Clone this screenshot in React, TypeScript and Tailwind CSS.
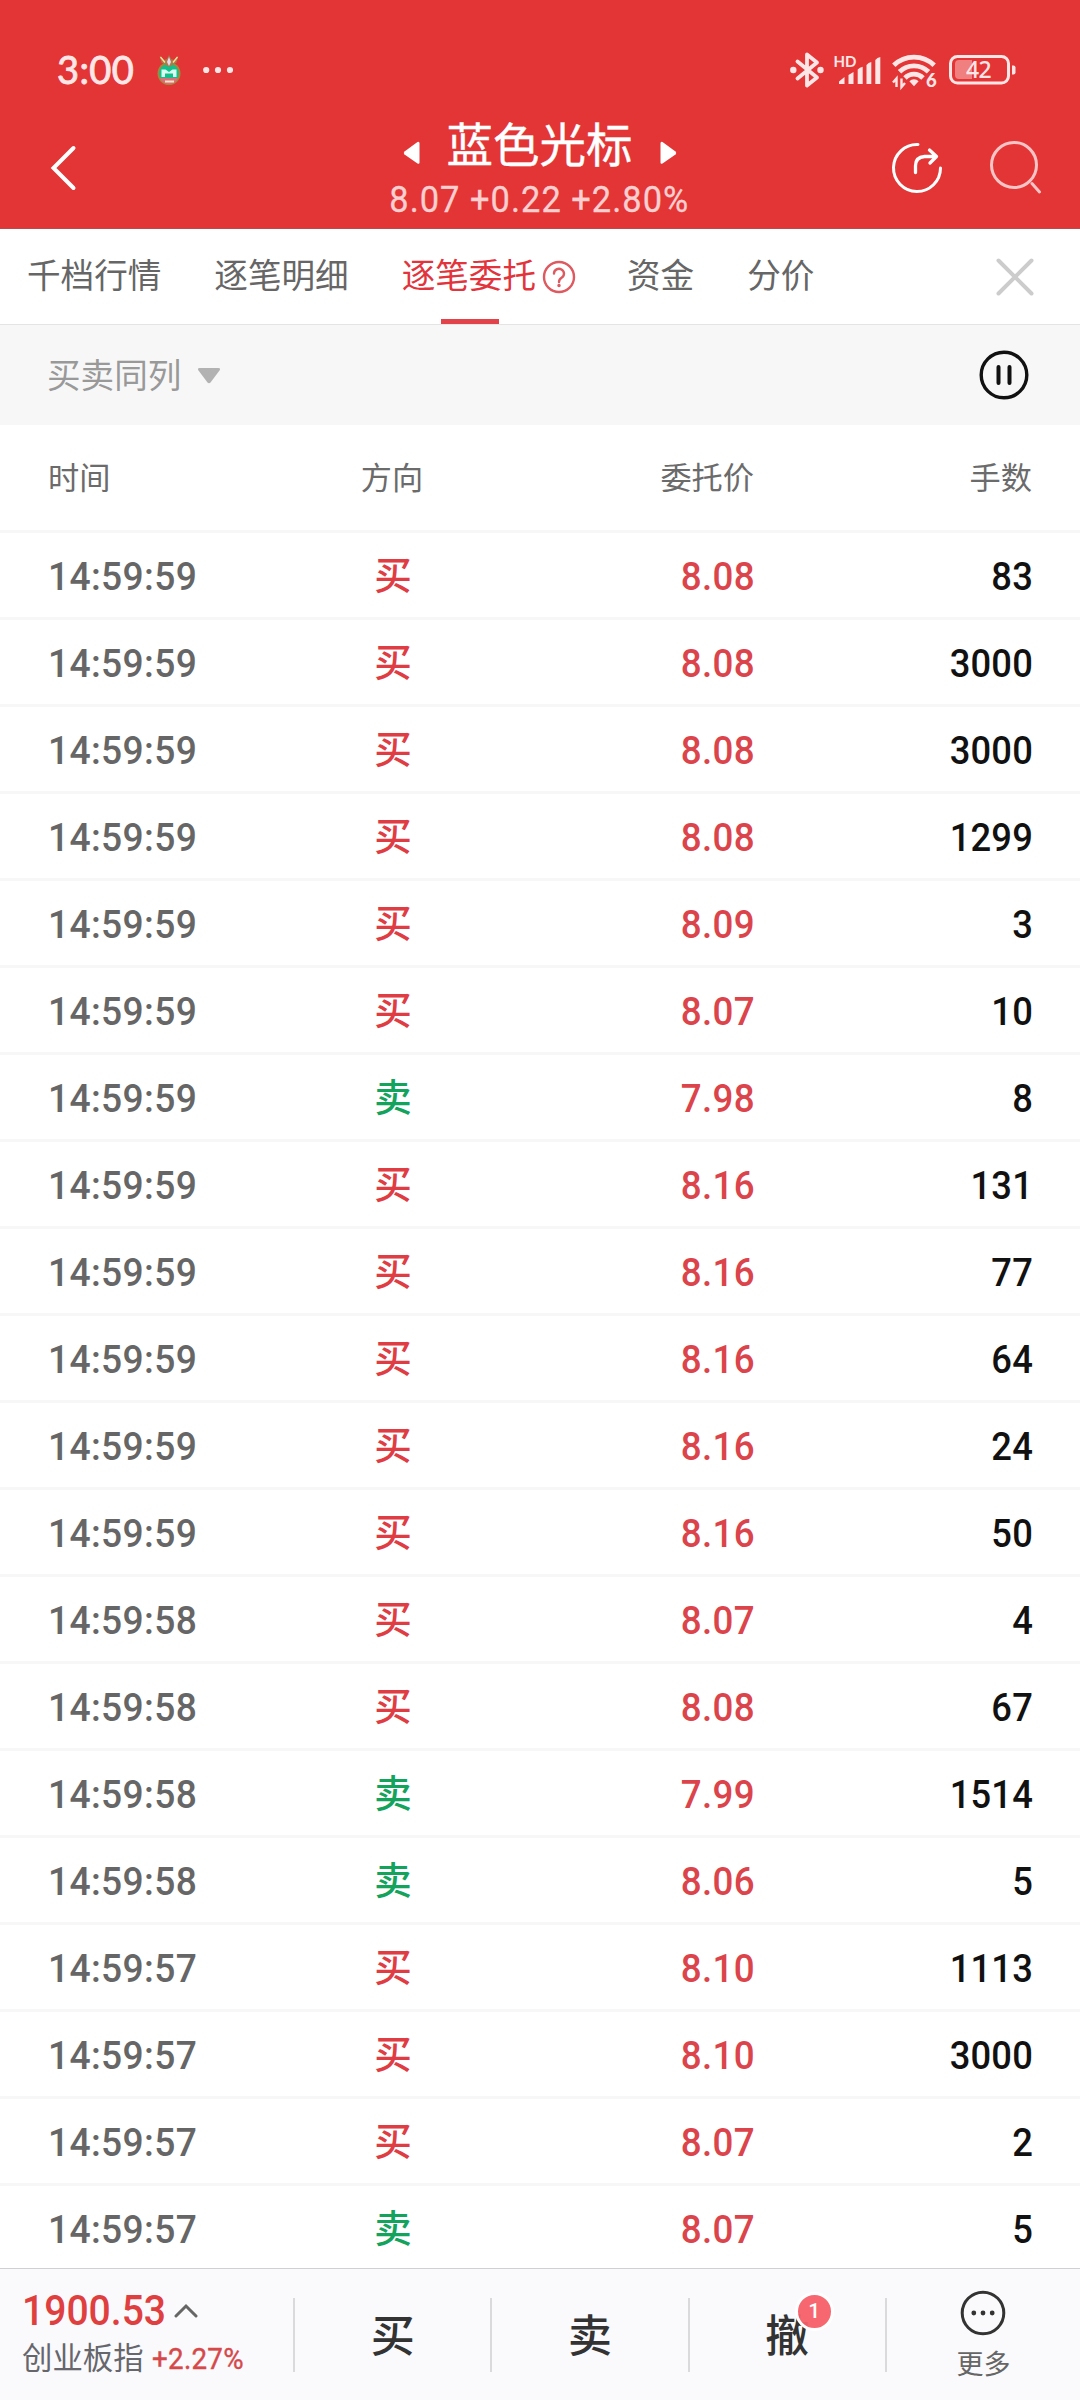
type Side = "买" | "卖"

type Order = {
  time: string
  side: Side
  price: string
  lots: number
}

const orders: Order[] = [
  { time: "14:59:59", side: "买", price: "8.08", lots: 83 },
  { time: "14:59:59", side: "买", price: "8.08", lots: 3000 },
  { time: "14:59:59", side: "买", price: "8.08", lots: 3000 },
  { time: "14:59:59", side: "买", price: "8.08", lots: 1299 },
  { time: "14:59:59", side: "买", price: "8.09", lots: 3 },
  { time: "14:59:59", side: "买", price: "8.07", lots: 10 },
  { time: "14:59:59", side: "卖", price: "7.98", lots: 8 },
  { time: "14:59:59", side: "买", price: "8.16", lots: 131 },
  { time: "14:59:59", side: "买", price: "8.16", lots: 77 },
  { time: "14:59:59", side: "买", price: "8.16", lots: 64 },
  { time: "14:59:59", side: "买", price: "8.16", lots: 24 },
  { time: "14:59:59", side: "买", price: "8.16", lots: 50 },
  { time: "14:59:58", side: "买", price: "8.07", lots: 4 },
  { time: "14:59:58", side: "买", price: "8.08", lots: 67 },
  { time: "14:59:58", side: "卖", price: "7.99", lots: 1514 },
  { time: "14:59:58", side: "卖", price: "8.06", lots: 5 },
  { time: "14:59:57", side: "买", price: "8.10", lots: 1113 },
  { time: "14:59:57", side: "买", price: "8.10", lots: 3000 },
  { time: "14:59:57", side: "买", price: "8.07", lots: 2 },
  { time: "14:59:57", side: "卖", price: "8.07", lots: 5 },
]

function StatusBar() {
  return (
    <div className="flex h-[100px] items-end justify-between pl-[57px] pr-[64px] pb-[8px] text-[#ffe6e6]">
      <div className="flex h-11 items-center">
        <span className="w-[99px] pb-[2px] text-[38px] leading-none tracking-[0.4px] font-['Lato',sans-serif] [-webkit-text-stroke:0.9px_#ffe6e6]">3:00</span>
        {/* Game notification */}
        <svg width="26" height="30" viewBox="0 0 26 30">
          <circle cx="13" cy="18.5" r="11.5" fill="#a8873c" />
          <circle cx="13" cy="18.5" r="9.800" fill="#12c08b" />
          <path d="M4 23h18a9.800 9.800 0 0 1-18 0Z" fill="#d8707c" />
          <path d="M5.500 22v-7.500h4l3.500 2.500 3.500-2.500h4V22h-3.500v-3.500h-8V22Z" fill="#d9fff2" />
          <path d="M10 19h6v4h-6Z" fill="#12c08b" />
          <path d="M3.500.5l4.500 4.500 3-1 2-4 2 4 3 1 4.500-4.500-2 7-3 2-4.500 2.500-4.500-2.500-3-2Z" fill="#a97c48" />
          <path d="M4.500 2l4.500 5.500M21.500 2 17 7.500" stroke="#ffe39a" strokeWidth="1.300" />
          <path d="M13 2l2 5-2 4-2-4Z" fill="#e7d9f2" />
          <path d="M9 25.500h9v2H9Z" fill="#ffe3c8" />
        </svg>
        <svg className="ml-[21px]" width="30" height="8" viewBox="0 0 30 8" fill="currentColor">
          <circle cx="3.200" cy="4" r="3.100" />
          <circle cx="15" cy="4" r="3.100" />
          <circle cx="27" cy="4" r="3.100" />
        </svg>
      </div>

      <div className="flex h-11 items-center">
        <svg width="34" height="38" viewBox="0 0 34 38" fill="none" stroke="currentColor" strokeWidth="3.800" strokeLinejoin="round" strokeLinecap="round">
          <path d="M7.500 10.500 27 26.500 17 34.500V3.500L27 11.500 7.500 27.500" />
          <circle cx="3.300" cy="19" r="3.200" fill="currentColor" stroke="none" />
          <circle cx="30.500" cy="19" r="3.200" fill="currentColor" stroke="none" />
        </svg>
        <svg className="ml-[8px]" width="50" height="38" viewBox="-2 -2 50 38" fill="currentColor">
          <text x="-0.500" y="13.500" fontSize="15" fontWeight="700" fontFamily="Lato, sans-serif">HD</text>
          <path d="M5 31v-2.500l5.500-4.500v7ZM14.500 31v-9l5-3v12Z" />
          <path d="M23.700 31V16.500q2-2 5-2.700V31ZM32.500 31V12q2-2.400 4.800-3V31ZM41.300 31V7q2-2.500 5-3v27Z" />
        </svg>
        <svg className="ml-[10px]" width="47" height="44" viewBox="0 -4 47 44" fill="none" stroke="currentColor" strokeWidth="4.800">
          <path d="M1.800 13.300a29 29 0 0 1 40.400 0" />
          <path d="M7.500 19.800a20.500 20.500 0 0 1 29 0" />
          <path d="M13 26a12.500 12.500 0 0 1 18 0" />
          <path d="M22 34.300l-4.600-5a6.300 6.300 0 0 1 9.200 0Z" fill="currentColor" stroke="none" />
          <path d="M4.500 35v-8.500L1 30.500M9.500 26.500V35l3.500-4" strokeWidth="2.400" />
          <text x="34" y="35" fontSize="18.500" fontWeight="900" fill="currentColor" stroke="none" fontFamily="Lato, sans-serif">6</text>
        </svg>
        <svg className="ml-[10px]" width="67" height="38" viewBox="0 -4 67 38">
          <rect x="1.500" y="1.500" width="58" height="26.500" rx="7" fill="none" stroke="currentColor" strokeWidth="3" />
          <path d="M10 5h13v19H10a4 4 0 0 1-4-4V9a4 4 0 0 1 4-4Z" fill="#f07f7f" />
          <path d="M63 10.500h1.500a2 2 0 0 1 2 2v5a2 2 0 0 1-2 2H63Z" fill="currentColor" />
          <text x="29.500" y="23.300" textAnchor="middle" fontSize="23" letterSpacing="-0.6" fontWeight="500" fill="currentColor" fontFamily="'Noto Sans', sans-serif">42</text>
        </svg>
      </div>
    </div>
  )
}

function Header() {
  return (
    <header className="h-[229px] shrink-0 bg-[#e33536] border-b border-[#b94a4e]">
      <StatusBar />
      <div className="flex h-[128px] justify-between pl-[50px] pr-[38px]">
        <svg className="mt-[45px]" width="138" height="46" viewBox="0 0 138 46" fill="none" stroke="#fff" strokeWidth="4">
          <path d="M23.500 3 3.500 23l20 20" strokeLinecap="round" />
        </svg>

        <div className="flex w-[310px] flex-col items-center">
          <div className="mt-[14px] flex h-[56px] items-center">
            <svg className="mt-[22px]" width="17" height="24" viewBox="0 0 17 24" fill="#fff">
              <path d="M16.500 2.500v19q0 2-2 1L1.500 13.500q-1.500-1.500 0-3L14.500 1q2-1 2 1.500Z" />
            </svg>
            <h1 className="mx-[27px] text-[46.500px] leading-[56px] text-white [-webkit-text-stroke:0.4px_#fff]">蓝色光标</h1>
            <svg className="mt-[22px]" width="17" height="24" viewBox="0 0 17 24" fill="#fff">
              <path d="M.5 2.500v19q0 2 2 1l13-9q1.500-1.500 0-3L2.500 1q-2-1-2 1.500Z" />
            </svg>
          </div>
          <div className="mt-[8px] scale-x-[0.93] text-[37px] leading-[44px] tracking-[1.100px] text-[#ffcfd0] font-['Roboto',sans-serif] [-webkit-text-stroke:0.3px_#ffcfd0] whitespace-pre">8.07 +0.22 +2.80%</div>
        </div>

        <div className="flex items-start">
          <svg className="mt-[42px]" width="52" height="52" viewBox="0 0 52 52" fill="none" stroke="#fff" strokeWidth="3" strokeLinecap="round">
            <path d="M27 2.500A23.500 23.500 0 1 0 49.500 26" />
            <path d="M24.500 30.500V24q0-9 9-9.500H44M38.500 8l7 6.500-6.500 6.500" strokeWidth="3.300" strokeLinejoin="round" />
          </svg>
          <svg className="ml-[47px] mt-[40px]" width="52" height="54" viewBox="0 0 52 54" fill="none" stroke="#ffc4c5" strokeWidth="3">
            <circle cx="24" cy="25" r="22.500" />
            <path d="M42 43.500l7.500 8.500" strokeLinecap="round" />
          </svg>
        </div>
      </div>
    </header>
  )
}

function Tabs() {
  return (
    <nav className="flex h-[96px] shrink-0 items-center border-b border-[#e4e4e4] bg-white pl-[27px] text-[33.600px] text-[#666]">
      <a className="pb-1 mr-[53px]">千档行情</a>
      <a className="pb-1 mr-[53px]">逐笔明细</a>
      <a className="relative flex h-full items-center text-[#e2343c]">
        <span className="pb-1">逐笔委托</span>
        <svg className="ml-[6px]" width="34" height="34" viewBox="0 0 34 34" fill="none" stroke="#dc5a60" strokeWidth="2.400">
          <circle cx="17" cy="17" r="15" />
          <path d="M12 13.500a5 4.800 0 1 1 7.600 4.200Q17 19.300 17 22" strokeLinecap="round" />
          <circle cx="17" cy="25.500" r="1" fill="#dc5a60" strokeWidth="1.500" />
        </svg>
        <i className="absolute bottom-0 left-[39px] h-[5px] w-[58px] bg-[#e2434a]" />
      </a>
      <a className="pb-1 ml-[51px] mr-[53px]">资金</a>
      <a className="pb-1">分价</a>
      <svg className="ml-auto mr-[46px]" width="38" height="38" viewBox="0 0 38 38" stroke="#ccc" strokeWidth="4" strokeLinecap="round">
        <path d="M2.500 2.500l33 33M35.500 2.500l-33 33" />
      </svg>
    </nav>
  )
}

function FilterBar() {
  return (
    <div className="flex h-[100px] shrink-0 items-center justify-between bg-[#f7f7f7] pl-[47px] pr-[51px] text-[33.600px] text-[#999]">
      <div className="flex items-center">
        <span className="pb-[2px]">买卖同列</span>
        <svg className="ml-[16px] mt-[2px]" width="24" height="16" viewBox="0 0 24 16" fill="#b2b2b2">
          <path d="M2.500 0h19q2.500 0 1 2.500l-9 12q-1.500 1.500-3 0l-9-12Q0 0 2.500 0Z" />
        </svg>
      </div>
      <svg width="50" height="50" viewBox="0 0 50 50" fill="none" stroke="#111">
        <circle cx="25" cy="25" r="22.800" strokeWidth="3.400" />
        <path d="M19.500 17v16M30.500 17v16" strokeWidth="4" strokeLinecap="round" />
      </svg>
    </div>
  )
}

function OrderRow({ order }: { order: Order }) {
  return (
    <div className="grid h-[87px] shrink-0 grid-cols-[293px_104px_310px_278px] items-center border-t-[3px] border-[#f7f7f7] pl-[48px] pt-1 text-[39.500px] font-medium font-['Roboto','Noto_Sans_CJK_SC',sans-serif]">
      <span className="origin-left scale-x-[0.94] tracking-[0.400px] text-[#666]">{order.time}</span>
      <span className={order.side === "买" ? "pb-[2px] text-center text-[37.500px] text-[#e03c44]" : "pb-[2px] text-center text-[37.500px] text-[#14a35c]"}>
        {order.side}
      </span>
      <span className="origin-right scale-x-[0.93] text-right tracking-[0.400px] text-[#dc444b]">{order.price}</span>
      <span className="origin-right scale-x-[0.92] text-right tracking-[0.200px] text-[#111]">{order.lots}</span>
    </div>
  )
}

function OrderTable() {
  return (
    <main className="flex min-h-0 flex-1 flex-col overflow-hidden bg-white">
      <div className="grid h-[105px] shrink-0 grid-cols-[293px_102px_311px_278px] items-center pl-[48px] pb-[2px] text-[31.200px] text-[#6b6b6b]">
        <span>时间</span>
        <span className="text-center">方向</span>
        <span className="text-right">委托价</span>
        <span className="text-right">手数</span>
      </div>
      {orders.map((order, i) => (
        <OrderRow key={i} order={order} />
      ))}
    </main>
  )
}

function BottomBar() {
  return (
    <footer className="flex h-[132px] shrink-0 items-center border-t border-[#d0d0d2] bg-[#fafafc] text-[#333]">
      {/* Index quote */}
      <div className="w-[293px] pl-[22px] pb-[5px]">
        <div className="flex h-[50px] items-center">
          <span className="w-[142px] origin-left scale-x-[0.93] text-[42px] font-medium text-[#df403f] font-['Roboto',sans-serif]">1900.53</span>
          <svg className="ml-[10px]" width="24" height="15" viewBox="0 0 24 15" fill="none" stroke="#666" strokeWidth="3">
            <path d="M2 13 12 3l10 10" strokeLinecap="round" />
          </svg>
        </div>
        <div className="flex h-[44px] items-center text-[30.400px] text-[#66666c]">
          <span>创业板指</span>
          <span className="ml-[8px] mt-[5px] origin-left scale-x-[0.94] text-[29.500px] tracking-[0.300px] text-[#d6494a] font-['Roboto',sans-serif] [-webkit-text-stroke:0.4px_#d6494a]">+2.27%</span>
        </div>
      </div>

      <i className="h-[74px] w-[2px] bg-[#dadadc]" />
      <button className="flex-1 pb-[4px] text-[44px] font-medium">买</button>
      <i className="h-[74px] w-[2px] bg-[#dadadc]" />
      <button className="flex-1 pb-[4px] text-[44px] font-medium">卖</button>
      <i className="h-[74px] w-[2px] bg-[#dadadc]" />
      <button className="relative flex-1 pb-[4px] text-[44px] font-medium">
        撤
        <b className="absolute left-[105px] top-[-8px] grid h-[39px] w-[39px] place-items-center rounded-full border-[3px] border-white bg-[#f75f68]/95 text-[21px] leading-none font-medium text-white font-['Roboto',sans-serif]">1</b>
      </button>
      <i className="h-[74px] w-[2px] bg-[#dadadc]" />
      <div className="flex w-[193px] flex-col items-center pt-[2px] text-[27px] text-[#666]">
        <svg width="46" height="46" viewBox="0 0 46 46" fill="#333">
          <circle cx="23" cy="23" r="20.800" fill="none" stroke="#333" strokeWidth="3" />
          <circle cx="13.800" cy="23" r="2.400" />
          <circle cx="23" cy="23" r="2.400" />
          <circle cx="32.200" cy="23" r="2.400" />
        </svg>
        <span className="mt-[8px] leading-[38px]">更多</span>
      </div>
    </footer>
  )
}

export default function App() {
  return (
    <div className="flex h-[2400px] w-[1080px] flex-col overflow-hidden bg-white font-['Noto_Sans_CJK_SC',sans-serif]">
      <Header />
      <Tabs />
      <FilterBar />
      <OrderTable />
      <BottomBar />
    </div>
  )
}
